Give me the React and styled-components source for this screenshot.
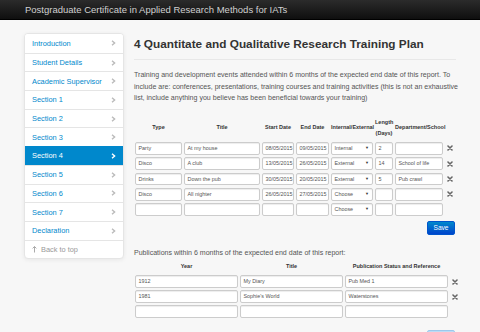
import React from "react";
import styled, { createGlobalStyle } from "styled-components";

const GlobalStyle = createGlobalStyle`
  html, body {
    margin: 0;
    padding: 0;
    background: #f7f7f7;
    font-family: "Liberation Sans", Arial, sans-serif;
    color: #333;
  }
  * { box-sizing: border-box; }
`;

const sections = [
  "Introduction",
  "Student Details",
  "Academic Supervisor",
  "Section 1",
  "Section 2",
  "Section 3",
  "Section 4",
  "Section 5",
  "Section 6",
  "Section 7",
  "Declaration",
];

const trainingRows = [
  { type: "Party", title: "At my house", start: "08/05/2015", end: "09/05/2015", kind: "Internal", days: "2", dept: "" },
  { type: "Disco", title: "A club", start: "13/05/2015", end: "26/05/2015", kind: "External", days: "14", dept: "School of life" },
  { type: "Drinks", title: "Down the pub", start: "30/05/2015", end: "20/05/2015", kind: "External", days: "5", dept: "Pub crawl" },
  { type: "Disco", title: "All nighter", start: "26/05/2015", end: "27/05/2015", kind: "Choose", days: "", dept: "" },
  { type: "", title: "", start: "", end: "", kind: "Choose", days: "", dept: "", blank: true },
];

const pubRows = [
  { year: "1912", title: "My Diary", status: "Pub Med 1" },
  { year: "1981", title: "Sophie's World", status: "Waterstones" },
  { year: "", title: "", status: "", blank: true },
];

function Chevron({ color }) {
  return (
    <svg width="5" height="6" viewBox="0 0 5 6">
      <polyline points="1,0.8 3.6,3 1,5.2" fill="none" stroke={color} strokeWidth="1.4" />
    </svg>
  );
}

function RemoveIcon() {
  return (
    <svg width="6" height="6" viewBox="0 0 6 6">
      <path d="M1 1 L5 5 M5 1 L1 5" stroke="#666" strokeWidth="1.6" strokeLinecap="round" />
    </svg>
  );
}

export default function App() {
  return (
    <>
      <GlobalStyle />
      <NavBar>
        <Brand>Postgraduate Certificate in Applied Research Methods for IATs</Brand>
      </NavBar>
      <Layout>
        <SideNav>
          {sections.map((name) => (
            <NavItem key={name} $active={name === "Section 4"}>
              <span>{name}</span>
              <Chevron color={name === "Section 4" ? "#fff" : "#bbb"} />
            </NavItem>
          ))}
          <BackItem>
            <svg width="5" height="7" viewBox="0 0 5 7">
              <path d="M2.5 0.5 L2.5 6.5 M0.6 2.4 L2.5 0.5 L4.4 2.4" fill="none" stroke="#aaa" strokeWidth="1" />
            </svg>
            Back to top
          </BackItem>
        </SideNav>

        <Main>
          <Heading>4 Quantitate and Qualitative Research Training Plan</Heading>
          <Rule />
          <Intro>
            Training and development events attended within 6 months of the expected end date of this
            report. To include are: conferences, presentations, training courses and training activities
            (this is not an exhaustive list, include anything you believe has been beneficial towards your
            training)
          </Intro>

          <TrainingGrid>
            <ColHead>Type</ColHead>
            <ColHead>Title</ColHead>
            <ColHead>Start Date</ColHead>
            <ColHead>End Date</ColHead>
            <ColHead>Internal/External</ColHead>
            <ColHead>Length<br />(Days)</ColHead>
            <ColHead>Department/School</ColHead>
            <span />
            {trainingRows.map((r, i) => (
              <React.Fragment key={i}>
                <Field>{r.type}</Field>
                <Field>{r.title}</Field>
                <Field>{r.start}</Field>
                <Field>{r.end}</Field>
                <Select>
                  <span>{r.kind}</span>
                  <Caret>▼</Caret>
                </Select>
                <Field>{r.days}</Field>
                <Field>{r.dept}</Field>
                <IconCell>{!r.blank && <RemoveIcon />}</IconCell>
              </React.Fragment>
            ))}
          </TrainingGrid>

          <ButtonRow>
            <SaveButton>Save</SaveButton>
          </ButtonRow>

          <SubText>Publications within 6 months of the expected end date of this report:</SubText>

          <PubGrid>
            <ColHead>Year</ColHead>
            <ColHead>Title</ColHead>
            <ColHead>Publication Status and Reference</ColHead>
            <span />
            {pubRows.map((r, i) => (
              <React.Fragment key={i}>
                <Field>{r.year}</Field>
                <Field>{r.title}</Field>
                <Field>{r.status}</Field>
                <IconCell>{!r.blank && <RemoveIcon />}</IconCell>
              </React.Fragment>
            ))}
          </PubGrid>

          <ButtonRow $top={12}>
            <SaveButton $faded>Save</SaveButton>
          </ButtonRow>
        </Main>
      </Layout>
    </>
  );
}

const NavBar = styled.header`
  height: 20px;
  background: linear-gradient(#2b2b2b, #0f0f0f);
  border-bottom: 1px solid #000;
  display: flex;
  align-items: center;
  padding-left: 25px;
`;

const Brand = styled.div`
  color: #d0d0d0;
  font-size: 9.5px;
`;

const Layout = styled.div`
  display: flex;
  align-items: flex-start;
  gap: 10px;
  padding-left: 24px;
`;

const SideNav = styled.nav`
  width: 100px;
  margin-top: 13px;
  background: #fff;
  border: 1px solid #e5e5e5;
  border-radius: 4px;
  box-shadow: 0 1px 4px rgba(0, 0, 0, 0.065);
  overflow: hidden;
`;

const NavItem = styled.div`
  height: 18.7px;
  display: flex;
  align-items: center;
  justify-content: space-between;
  padding: 0 7px 0 7px;
  font-size: 7.4px;
  color: ${(p) => (p.$active ? "#fff" : "#0088cc")};
  background: ${(p) => (p.$active ? "#0088cc" : "#fff")};
  border-top: 1px solid ${(p) => (p.$active ? "#0088cc" : "#e5e5e5")};
  &:first-child { border-top: none; }
`;

const BackItem = styled.div`
  height: 18.7px;
  display: flex;
  align-items: center;
  gap: 4px;
  padding-left: 7px;
  font-size: 7.4px;
  color: #999;
  border-top: 1px solid #e5e5e5;
`;

const Main = styled.main`
  width: 322px;
  padding-top: 17px;
`;

const Heading = styled.h1`
  margin: 0;
  font-size: 11.8px;
  line-height: 14px;
  font-weight: bold;
  color: #333;
`;

const Rule = styled.hr`
  margin: 8px 0 9px;
  border: 0;
  border-top: 1px solid #e8e8e8;
`;

const Intro = styled.p`
  margin: 0 -8px 0 0;
  font-size: 7.05px;
  line-height: 11.5px;
  color: #555;
`;

const TrainingGrid = styled.div`
  margin-top: 13px;
  padding-left: 1px;
  display: grid;
  grid-template-columns: 47px 76px 32px 33px 42px 18px 48px 9px;
  column-gap: 2px;
  row-gap: 2.5px;
  align-items: center;
`;

const PubGrid = styled.div`
  margin-top: 3px;
  padding-left: 1px;
  display: grid;
  grid-template-columns: 103px 103px 103px 9px;
  column-gap: 2px;
  row-gap: 2px;
  align-items: center;
`;

const ColHead = styled.div`
  font-size: 5.5px;
  line-height: 11px;
  font-weight: bold;
  color: #333;
  text-align: center;
  white-space: nowrap;
  padding-bottom: 1px;
`;

const Field = styled.div`
  height: 12.8px;
  background: #fff;
  border: 1px solid #ccc;
  border-radius: 2px;
  box-shadow: inset 0 1px 1px rgba(0, 0, 0, 0.075);
  font-size: 5.4px;
  line-height: 10.8px;
  color: #555;
  padding-left: 2.5px;
  white-space: nowrap;
  overflow: hidden;
`;

const Select = styled(Field)`
  display: flex;
  justify-content: space-between;
  padding-right: 3px;
  background: #fff;
`;

const Caret = styled.span`
  font-size: 4px;
  color: #333;
`;

const IconCell = styled.div`
  display: flex;
  align-items: center;
  justify-content: center;
`;

const ButtonRow = styled.div`
  display: flex;
  justify-content: flex-end;
  margin-top: ${(p) => p.$top ?? 5}px;
  padding-right: 1px;
`;

const SaveButton = styled.button`
  width: 28px;
  height: 14px;
  padding: 0;
  border-radius: 2px;
  font-family: inherit;
  font-size: 6.6px;
  color: #fff;
  border: 1px solid ${(p) => (p.$faded ? "#9cc8ec" : "#0055cc")};
  background: ${(p) =>
    p.$faded ? "linear-gradient(#bcdcf5, #a7cdef)" : "linear-gradient(#0088cc, #0044cc)"};
`;

const SubText = styled.p`
  margin: 12px 0 0;
  font-size: 7.05px;
  line-height: 11.5px;
  color: #555;
`;
